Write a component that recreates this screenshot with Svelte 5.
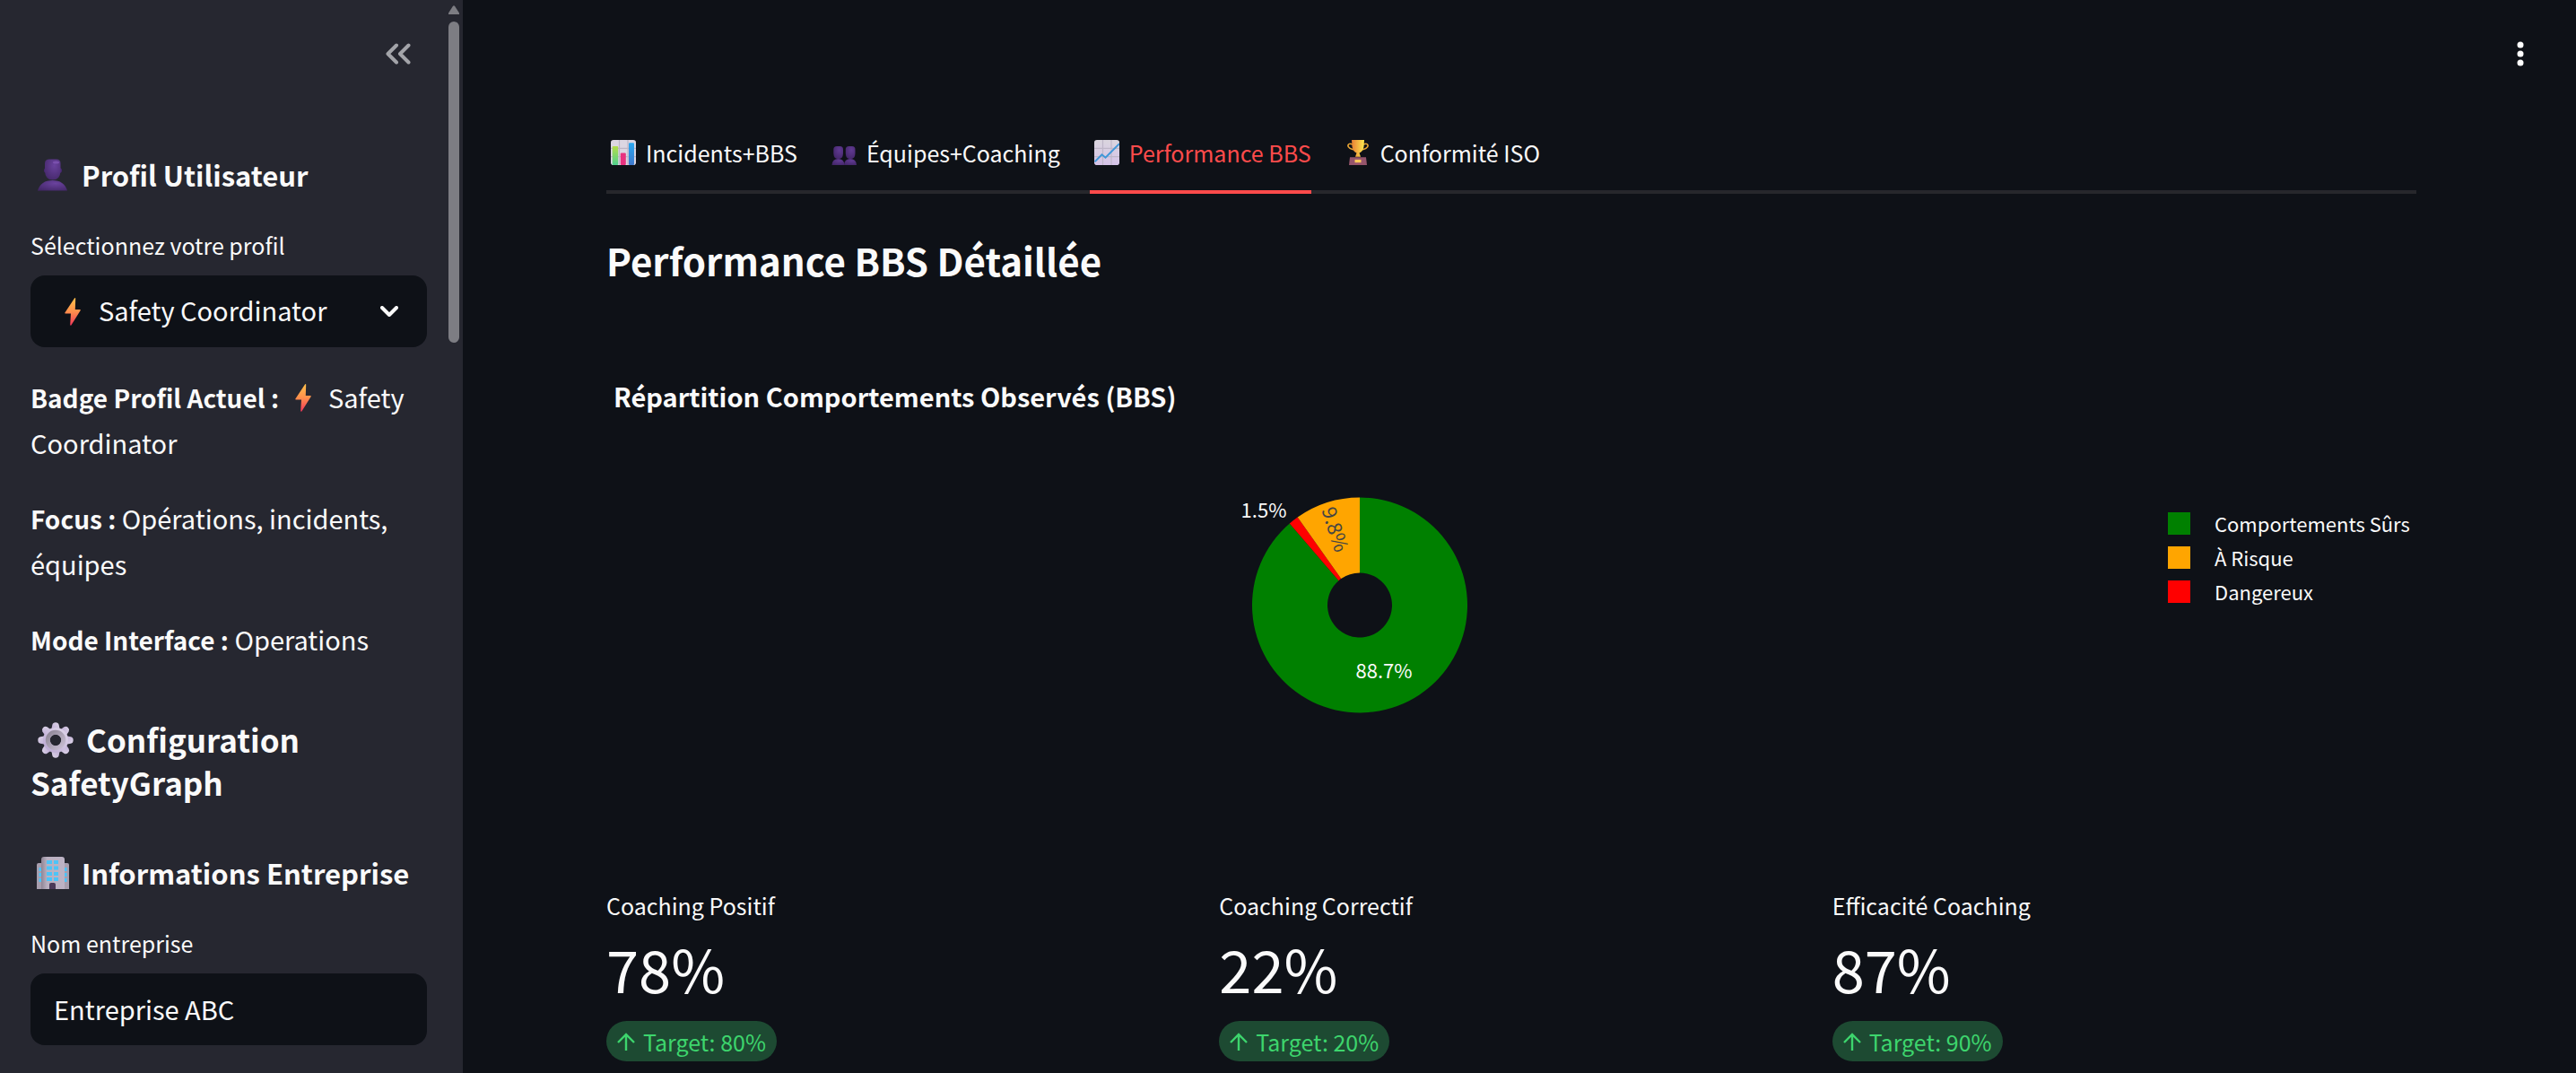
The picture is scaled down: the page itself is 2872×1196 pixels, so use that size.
<script>
  const tabs = [
    { label: 'Incidents+BBS', icon: 'bars' },
    { label: 'Équipes+Coaching', icon: 'people' },
    { label: 'Performance BBS', icon: 'trend' },
    { label: 'Conformité ISO', icon: 'trophy' }
  ];
  let active = $state(2);
  let company = $state('Entreprise ABC');
  let profile = $state('Safety Coordinator');

  const legend = [
    { label: 'Comportements Sûrs', kind: 'safe' },
    { label: 'À Risque', kind: 'risk' },
    { label: 'Dangereux', kind: 'danger' }
  ];

  const metrics = [
    { label: 'Coaching Positif', value: '78%', target: 'Target: 80%' },
    { label: 'Coaching Correctif', value: '22%', target: 'Target: 20%' },
    { label: 'Efficacité Coaching', value: '87%', target: 'Target: 90%' }
  ];

  // Ring sector between two clockwise turns (0..1) measured from twelve o'clock.
  function sector(from, to, outer = 120, inner = 36) {
    const at = (turn, r) => {
      const a = turn * Math.PI * 2;
      return `${(Math.sin(a) * r).toFixed(2)} ${(-Math.cos(a) * r).toFixed(2)}`;
    };
    const large = to - from > 0.5 ? 1 : 0;
    return `M${at(from, inner)}L${at(from, outer)}A${outer} ${outer} 0 ${large} 1 ${at(to, outer)}L${at(to, inner)}A${inner} ${inner} 0 ${large} 0 ${at(from, inner)}Z`;
  }
</script>

<svelte:head><title>SafetyGraph</title></svelte:head>

{#snippet bolt()}
  <svg class="bolt" viewBox="0 0 18 31" aria-hidden="true">
    <defs>
      <linearGradient id="boltFill" x1="0" y1="0" x2="0" y2="1">
        <stop offset="0" stop-color="#ffc04a" /><stop offset=".5" stop-color="#ff8f4c" /><stop offset="1" stop-color="#f1365a" />
      </linearGradient>
    </defs>
    <path d="M11 .4 .4 16.4q-.5 1 .6 1H7L6.200 30q.2 1.200 1.200.4L17.700 14q.5-1-.6-1H11.800L12.200.6Q11.700-.3 11 .4Z" fill="url(#boltFill)" />
  </svg>
{/snippet}

<div class="app">
  <aside class="sidebar">
    <div class="side-head">
      <button class="icon-btn" aria-label="Réduire la barre latérale">
        <svg width="28" height="24" viewBox="0 0 28 24" fill="none" stroke="#a3a4a9" stroke-width="4" stroke-linecap="round" stroke-linejoin="round">
          <path d="M12 2.500 2.500 12 12 21.500M25.500 2.500 16 12l9.500 9.500" />
        </svg>
      </button>
    </div>

    <h3 class="first">
      <svg class="emoji" viewBox="0 0 36 36" aria-hidden="true">
        <defs>
          <radialGradient id="headFill" cx=".6" cy=".3" r=".8"><stop offset="0" stop-color="#6a429e" /><stop offset="1" stop-color="#432768" /></radialGradient>
        </defs>
        <path d="M1 35.500Q4.500 24 17.500 24T34 35.500Z" fill="url(#headFill)" />
        <rect x="8" y="10" width="20" height="6" rx="3" fill="#46286e" />
        <path d="M9 5Q9 .5 14 .5H22Q26.500.5 26.500 5V14Q26 23.500 17.700 23.500 9.500 23.500 9 14Z" fill="url(#headFill)" />
        <ellipse cx="21.500" cy="4" rx="3.500" ry="1.500" fill="#7a50ae" />
      </svg>Profil Utilisateur
    </h3>

    <label for="profile">Sélectionnez votre profil</label>
    <div class="select">
      {@render bolt()}
      <select id="profile" bind:value={profile}>
        <option>Safety Coordinator</option>
      </select>
      <svg class="chevron" viewBox="0 0 20 12" fill="none" stroke="#fafafa" stroke-width="4" stroke-linecap="round" stroke-linejoin="round" aria-hidden="true">
        <path d="M2 2l8 8 8-8" />
      </svg>
    </div>

    <div class="facts">
      <p><strong>Badge Profil Actuel :</strong> {@render bolt()} Safety Coordinator</p>
      <p><strong>Focus :</strong> Opérations, incidents, équipes</p>
      <p><strong>Mode Interface :</strong> Operations</p>
    </div>

    <h2>
      <svg class="emoji" viewBox="0 0 40 40" aria-hidden="true">
        <defs>
          <linearGradient id="gearFill" x1="1" y1="0" x2="0" y2="1"><stop offset="0" stop-color="#e0d8ea" /><stop offset="1" stop-color="#b9a6d2" /></linearGradient>
          <linearGradient id="hubFill" x1="0" y1="0" x2="1" y2="1"><stop offset="0" stop-color="#8f8797" /><stop offset="1" stop-color="#c8bed2" /></linearGradient>
        </defs>
        <g fill="url(#gearFill)">
          {#each [0, 45, 90, 135, 180, 225, 270, 315] as angle}
            <path d="M15 10 16.300 3Q17 .3 20 .3T23.700 3L25 10Z" transform="rotate({angle} 20 20)" />
          {/each}
        </g>
        <path d="M20 6A14 14 0 1 1 20 34 14 14 0 0 1 20 6ZM20 13.500A6.500 6.500 0 1 0 20 26.500 6.500 6.500 0 0 0 20 13.500Z" fill="url(#gearFill)" />
        <circle cx="20" cy="20" r="8.700" fill="none" stroke="url(#hubFill)" stroke-width="5" />
      </svg>Configuration SafetyGraph
    </h2>

    <h3>
      <svg class="emoji" viewBox="0 0 36 36" aria-hidden="true">
        <defs>
          <linearGradient id="wallFill"><stop offset="0" stop-color="#8f8696" /><stop offset=".25" stop-color="#b9b0c0" /><stop offset="1" stop-color="#bdb3c5" /></linearGradient>
        </defs>
        <path d="M0 9Q0 7 2 7H34Q36 7 36 9V36H0Z" fill="#a79eae" />
        <path d="M5 3Q5 0 8 0H28Q31 0 31 3V36H5Z" fill="url(#wallFill)" />
        <g fill="#4cc4f8">
          {#each [4, 10.500, 17, 23] as y}
            <rect x="11" {y} width="6" height="4" /><rect x="19" {y} width="5" height="4" />
          {/each}
          {#each [12, 18, 24] as y}
            <rect x="2.500" {y} width="2.500" height="4" /><rect x="31" {y} width="2.500" height="4" />
          {/each}
        </g>
        <path d="M14 36V31Q14 29 16 29H19Q21 29 21 31V36Z" fill="#4a3a58" />
      </svg>Informations Entreprise
    </h3>

    <label for="company">Nom entreprise</label>
    <input id="company" type="text" bind:value={company} />

    <div class="scrollbar" aria-hidden="true">
      <svg viewBox="0 0 12 10"><path d="M4.700 1.200Q6-.7 7.300 1.200L12 8.500V10H0V8.500Z" fill="#7d7d83" /></svg>
      <span class="thumb"></span>
    </div>
  </aside>

  <main>
    <header>
      <button class="icon-btn" aria-label="Menu principal">
        <svg width="8" height="28" viewBox="0 0 8 28" fill="#fff"><circle cx="4" cy="4" r="3.500" /><circle cx="4" cy="14" r="3.500" /><circle cx="4" cy="24" r="3.500" /></svg>
      </button>
    </header>

    <div class="content">
      <div class="tabs" role="tablist">
        {#each tabs as tab, i}
          <button role="tab" aria-selected={active === i} class:active={active === i} onclick={() => (active = i)}>
            <svg viewBox="0 0 28 30" preserveAspectRatio="none" aria-hidden="true">
              {#if tab.icon === 'bars'}
                <defs>
                  <linearGradient id="barG" x1="0" y1="0" x2="0" y2="1"><stop offset="0" stop-color="#b4dc4a" /><stop offset="1" stop-color="#4fd18e" /></linearGradient>
                  <linearGradient id="barB" x1="0" y1="0" x2="0" y2="1"><stop offset="0" stop-color="#2aa8f0" /><stop offset="1" stop-color="#3f78cc" /></linearGradient>
                </defs>
                <rect width="28" height="30" rx="3" fill="#dcd6e2" />
                <path d="M9.500 0V30M19 0V30M0 10H28M0 20H28" stroke="#bdb5c6" stroke-width="1.200" />
                <rect x="1.700" y="7.500" width="6.500" height="22.500" rx="1" fill="url(#barG)" />
                <rect x="10.800" y="15.500" width="6" height="14.500" rx="1" fill="#e8317f" />
                <rect x="20" y="3.500" width="6" height="26.500" rx="1" fill="url(#barB)" />
              {:else if tab.icon === 'people'}
                <defs>
                  <radialGradient id="duoFill" cx=".6" cy=".3" r=".8"><stop offset="0" stop-color="#603a92" /><stop offset="1" stop-color="#422567" /></radialGradient>
                </defs>
                {#each [1, 14.500] as x}
                  <g transform="translate({x} 0)" fill="url(#duoFill)">
                    <path d="M-.5 30Q0 22.500 6.500 22.500T13.500 30Z" />
                    <path d="M1.300 11.500Q1.300 7.500 5 7.500H8.500Q12 7.500 12 11.500V16Q11.800 22.700 6.600 22.700 1.500 22.700 1.300 16Z" />
                  </g>
                {/each}
              {:else if tab.icon === 'trend'}
                <defs>
                  <linearGradient id="sheet" x1="0" y1="0" x2="0" y2="1"><stop offset="0" stop-color="#dad5de" /><stop offset="1" stop-color="#d5c3e8" /></linearGradient>
                </defs>
                <rect width="28" height="30" rx="3" fill="url(#sheet)" />
                <path d="M9.500 0V30M19 0V30M0 10H28M0 20H28" stroke="#beb6c8" stroke-width="1.200" />
                <path d="M.5 26 8.500 17.500l4 3.500L28 4.500" fill="none" stroke="#3f97d8" stroke-width="2" />
              {:else}
                <defs>
                  <linearGradient id="cupFill"><stop offset="0" stop-color="#e87f35" /><stop offset="1" stop-color="#ffe94e" /></linearGradient>
                </defs>
                <path d="M8 5.500C4 3 2 6 3.500 8.500S8 11 9 11.500M20 5.500c4-2.500 6 .5 4.500 3S20 11 19 11.500" fill="none" stroke="#eaa634" stroke-width="1.600" />
                <path d="M7 0H21L20.500 8Q19.500 14 15.500 15.500L17 20H11l1.500-4.500Q8.500 14 7.500 8Z" fill="url(#cupFill)" />
                <path d="M5 20.500H23L24 30H4Z" fill="#96556c" />
                <rect x="10.500" y="23.500" width="7" height="3.500" fill="#ffc95c" />
              {/if}
            </svg>{tab.label}
          </button>
        {/each}
      </div>

      <h1>Performance BBS Détaillée</h1>

      <section class="chart">
        <h4>Répartition Comportements Observés (BBS)</h4>
        <div class="plot">
          <svg class="pie" viewBox="-170 -130 340 260" role="img" aria-label="Répartition des comportements observés">
            <path d={sector(0, 0.887)} fill="#008000" />
            <path d={sector(0.887, 0.902)} fill="#ff0000" />
            <path d={sector(0.902, 1)} fill="#ffa500" />
            <text x="-107" y="-98" text-anchor="middle">1.5%</text>
            <text x="27" y="81" text-anchor="middle">88.7%</text>
            <text class="dark" text-anchor="middle" transform="translate(-35 -82) rotate(72)">9.8%</text>
          </svg>
          <ul>
            {#each legend as item}
              <li><span class="swatch {item.kind}"></span>{item.label}</li>
            {/each}
          </ul>
        </div>
      </section>

      <section class="metrics">
        {#each metrics as m}
          <article>
            <div class="name">{m.label}</div>
            <div class="value">{m.value}</div>
            <div class="delta">
              <svg width="20" height="20" viewBox="0 0 20 20" fill="none" stroke="#3dd56d" stroke-width="2.400" aria-hidden="true"><path d="M10 20V2M1 11l9-9 9 9" /></svg>
              {m.target}
            </div>
          </article>
        {/each}
      </section>
    </div>
  </main>
</div>

<style>
  :global(body) {
    margin: 0;
    background: #0e1117;
  }
  .app {
    display: flex;
    height: 100vh;
    overflow: hidden;
    color: #fafafa;
    font: 400 29px/51px 'Noto Sans CJK SC', 'Noto Sans', sans-serif;
  }
  button, select, input {
    font: inherit;
    color: inherit;
    border: 0;
    margin: 0;
  }
  button {
    background: none;
    padding: 0;
    cursor: pointer;
  }
  h1, h2, h3, h4, p, ul {
    margin: 0;
    padding: 0;
  }
  h1, h2, h3, strong {
    font-weight: 600;
  }
  .icon-btn {
    display: flex;
  }

  .sidebar {
    position: relative;
    box-sizing: border-box;
    flex: 0 0 516px;
    padding: 0 40px 0 34px;
    background: #262730;
    overflow: hidden;
  }
  .side-head {
    display: flex;
    align-items: center;
    justify-content: flex-end;
    height: 120px;
    padding-right: 18px;
  }
  h3 {
    margin: 55px 0 37px;
    font-size: 31px;
    line-height: 44px;
    white-space: nowrap;
  }
  h3.first {
    margin-top: 53px;
  }
  h2 {
    margin-top: 62px;
    font-size: 35px;
    line-height: 48px;
  }
  h3 .emoji {
    width: 36px;
    height: 36px;
    margin: 0 14px 0 7px;
    vertical-align: -5px;
  }
  h2 .emoji {
    width: 40px;
    height: 40px;
    margin: 0 14px 0 8px;
    vertical-align: -6px;
  }
  strong {
    font-size: 28px;
    line-height: 1;
  }
  label {
    display: block;
    margin-bottom: 15px;
    font-size: 25px;
    line-height: 38px;
  }
  .bolt {
    width: 18px;
    height: 31px;
  }
  .select {
    display: flex;
    align-items: center;
    position: relative;
    height: 80px;
    border-radius: 16px;
    background: #0e1117;
  }
  .select .bolt {
    position: absolute;
    left: 38px;
    pointer-events: none;
  }
  select {
    appearance: none;
    width: 100%;
    height: 100%;
    padding: 0 60px 3px 76px;
    background: none;
  }
  .chevron {
    position: absolute;
    right: 32px;
    width: 20px;
    height: 12px;
    pointer-events: none;
  }
  .facts {
    display: grid;
    gap: 33px;
    margin-top: 30px;
  }
  .facts .bolt {
    margin: 0 13px 0 11px;
    vertical-align: -4px;
  }
  input {
    box-sizing: border-box;
    width: 100%;
    height: 80px;
    padding: 0 26px 3px;
    border-radius: 16px;
    background: #0e1117;
  }
  .scrollbar {
    position: absolute;
    top: 6px;
    right: 4px;
    width: 12px;
    display: grid;
    gap: 8px;
  }
  .scrollbar svg {
    display: block;
    width: 12px;
    height: 10px;
  }
  .thumb {
    height: 358px;
    border-radius: 6px;
    background: #7d7d83;
  }

  main {
    flex: 1;
    min-width: 0;
    overflow: hidden;
  }
  header {
    display: flex;
    align-items: center;
    justify-content: flex-end;
    height: 120px;
    padding-right: 58px;
  }
  .content {
    padding: 8px 178px 0 160px;
  }
  .tabs {
    display: flex;
    gap: 33px;
    border-bottom: 4px solid #26272c;
  }
  .tabs button {
    display: flex;
    align-items: center;
    height: 88px;
    margin-bottom: -4px;
    border-bottom: 4px solid transparent;
    font-size: 25px;
    line-height: 38px;
    white-space: nowrap;
  }
  .tabs button.active {
    color: #ff4b4b;
    border-color: #ff4b4b;
  }
  .tabs svg {
    width: 28px;
    height: 28px;
    margin: 0 11px 0 5px;
  }
  h1 {
    margin-top: 45px;
    font-size: 42px;
    line-height: 58px;
  }
  .chart {
    margin-top: 102px;
  }
  h4 {
    padding-left: 8px;
    font-size: 29px;
    line-height: 40px;
  }
  .plot {
    display: grid;
    grid-template-columns: 1fr 338px;
    margin-top: 83px;
  }
  .pie {
    justify-self: center;
    width: 340px;
    height: 261px;
  }
  .pie text {
    fill: #fafafa;
    font-size: 22px;
  }
  .pie .dark {
    fill: #444;
  }
  ul {
    padding: 20px 0 0 61px;
    list-style: none;
  }
  li {
    display: flex;
    align-items: center;
    gap: 27px;
    height: 38px;
    font-size: 22px;
    line-height: 38px;
    white-space: nowrap;
  }
  .swatch {
    width: 25px;
    height: 25px;
  }
  .safe {
    background: #008000;
  }
  .risk {
    background: #ffa500;
  }
  .danger {
    background: #ff0000;
  }
  .metrics {
    display: grid;
    grid-template-columns: repeat(3, 1fr);
    gap: 32px;
    margin-top: 185px;
  }
  .name {
    font-size: 25px;
    line-height: 38px;
  }
  .value {
    margin: 6px 0 14px;
    font-size: 65px;
    line-height: 90px;
  }
  .delta {
    display: flex;
    align-items: center;
    gap: 9px;
    width: fit-content;
    height: 45px;
    padding: 0 12px;
    border-radius: 23px;
    background: #1d4a32;
    color: #3dd56d;
    font-size: 25px;
    line-height: 44px;
  }
</style>
